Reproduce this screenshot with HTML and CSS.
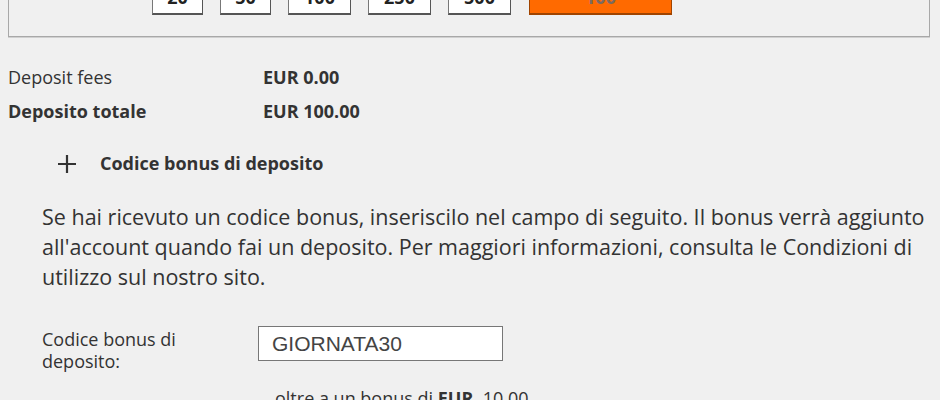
FILE: index.html
```html
<!DOCTYPE html>
<html lang="it">

<head>
    <meta charset="UTF-8">
    <meta name="viewport" content="width=device-width, initial-scale=1.0">
    <title>Deposito</title>
    <link rel="stylesheet" href="styles.css">
</head>

<body>
    <div class="amount-box">
        <div class="presets">
            <button class="preset small">20</button>
            <button class="preset small">50</button>
            <button class="preset">100</button>
            <button class="preset">250</button>
            <button class="preset">500</button>
            <button class="preset selected">100</button>
        </div>
    </div>

    <div class="summary">
        <span class="label">Deposit fees</span>
        <span class="value">EUR 0.00</span>
        <span class="label strong">Deposito totale</span>
        <span class="value">EUR 100.00</span>
    </div>

    <div class="bonus-toggle">
        <svg class="plus" width="20" height="20" viewBox="0 0 20 20">
            <path d="M10 1v18M1 10h18" stroke="#333" stroke-width="2.2" fill="none" />
        </svg>
        <span class="toggle-title">Codice bonus di deposito</span>
    </div>

    <p class="bonus-info">Se hai ricevuto un codice bonus, inseriscilo nel campo di seguito. Il bonus verrà aggiunto all'account quando fai un deposito. Per maggiori informazioni, consulta le Condizioni di utilizzo sul nostro sito.</p>

    <div class="bonus-field">
        <label for="bonus">Codice bonus di deposito:</label>
        <input type="text" id="bonus" name="bonus" value="GIORNATA30">
    </div>

    <p class="bonus-extra">oltre a un bonus di <b>EUR</b>&nbsp; 10.00</p>
</body>

</html>
```

FILE: styles.css
```css
body {
    margin: 0;
    background: #f0f0f0;
    color: #333;
    font-family: "Open Sans", sans-serif;
    font-size: 18px;
    overflow: hidden;
}

.amount-box {
    margin: -31px 10px 0 8px;
    border: 1px solid #a8a8a8;
    box-shadow: 0 1px 0 #d0d0d0;
    padding: 0 0 21px 143px;
}

.presets {
    display: flex;
    gap: 17px;
}

.preset {
    width: 63px;
    height: 45px;
    padding: 10px 0 0;
    background: #fff;
    border: 1px solid #777;
    border-right-color: #555;
    border-bottom: 2px solid #555;
    font: bold 18px "Open Sans", sans-serif;
    color: #222;
}

.preset.small {
    width: 51px;
}

.preset.selected {
    width: 143px;
    margin-left: 1px;
    background: #ff6a00;
    border-color: #a04400;
    color: #7a6a60;
}

.summary {
    display: grid;
    grid-template-columns: 255px auto;
    row-gap: 9px;
    margin: 28px 0 0 8px;
    line-height: 25px;
}

.summary .value,
.summary .strong {
    font-weight: bold;
}

.bonus-toggle {
    display: flex;
    align-items: center;
    margin: 27px 0 0 57px;
    font-weight: bold;
    line-height: 25px;
}

.plus {
    margin-right: 23px;
}

.bonus-info {
    margin: 26px 8px 0 42px;
    font-size: 21.5px;
    line-height: 30px;
}

.bonus-field {
    display: flex;
    align-items: flex-start;
    margin: 36px 0 0 42px;
}

.bonus-field label {
    width: 150px;
    margin-right: 66px;
    line-height: 22px;
}

.bonus-field input {
    width: 245px;
    height: 35px;
    box-sizing: border-box;
    margin-top: -2px;
    padding: 0 13px;
    border: 1px solid #777;
    background: #fff;
    font: 21px "Liberation Sans", Arial, sans-serif;
    color: #444;
}

.bonus-extra {
    margin: 14px 0 0 275px;
    font-size: 18px;
}
```
